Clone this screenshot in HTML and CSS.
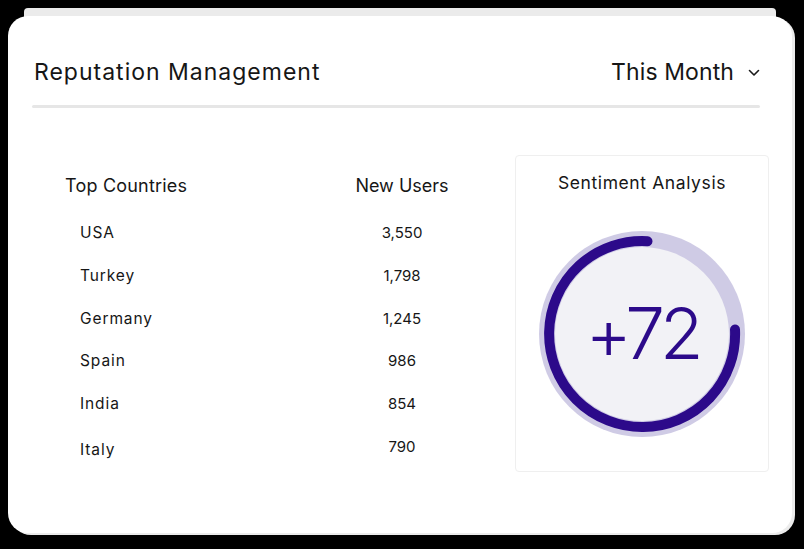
FILE: index.html
```html
<!DOCTYPE html>
<html lang="en">
<head>
<meta charset="utf-8">
<title>Reputation Management</title>
<link rel="stylesheet" href="styles.css">
</head>
<body>
<div class="card">
  <div class="head-wrap">
    <div class="head">
      <h1 class="title">Reputation Management</h1>
      <div class="period">
        <span>This Month</span>
        <svg class="chev" width="12" height="8" viewBox="0 0 12 8"><polyline points="1.5,1.5 6,6 10.5,1.5" fill="none" stroke="#1a1a1a" stroke-width="1.6" stroke-linecap="round" stroke-linejoin="round"/></svg>
      </div>
    </div>
    <div class="divider"></div>
  </div>
  <div class="body">
    <div class="table">
      <div class="th">Top Countries</div>
      <div class="th num">New Users</div>
      <div class="td">USA</div><div class="td num">3,550</div>
      <div class="td">Turkey</div><div class="td num">1,798</div>
      <div class="td">Germany</div><div class="td num">1,245</div>
      <div class="td">Spain</div><div class="td num">986</div>
      <div class="td">India</div><div class="td num">854</div>
      <div class="td low">Italy</div><div class="td num">790</div>
    </div>
    <div class="sentiment">
      <div class="s-title">Sentiment Analysis</div>
      <div class="gauge">
        <svg width="210" height="210" viewBox="0 0 210 210">
          <circle cx="105" cy="105" r="103" fill="#cfcbe5"/>
          <circle cx="105" cy="105" r="87" fill="#f2f2f6"/>
          <path d="M 198 100.5 A 93 93 0 1 1 110.5 12.2" fill="none" stroke="#2c0a8a" stroke-width="10" stroke-linecap="round"/>
        </svg>
        <div class="score">+72</div>
      </div>
    </div>
  </div>
</div>
</body>
</html>
```
FILE: styles.css
```css
* { box-sizing: border-box; }
html, body { margin: 0; padding: 0; }
body {
  background: #000;
  width: 804px;
  height: 549px;
  overflow: hidden;
  font-family: "Inter", "Liberation Sans", sans-serif;
  color: #161616;
  padding: 16px 0 0 8px;
}
.card {
  width: 784px;
  height: 517px;
  background: #fff;
  border-radius: 20px;
  box-shadow: 0 -24px 0 -16px #ebebeb, 3px 2px 0 0 #ececec;
  padding-top: 40px;
}
.head-wrap { padding: 0 32px 0 24px; }
.head {
  display: flex;
  align-items: center;
  justify-content: space-between;
  height: 32px;
  padding: 0 0 0 2px;
}
.title {
  margin: 0;
  font-size: 23px;
  font-weight: 400;
  line-height: 32px;
  letter-spacing: 1px;
}
.period {
  display: flex;
  align-items: center;
  gap: 14px;
  font-size: 23px;
  line-height: 32px;
  letter-spacing: 0.1px;
}
.chev { display: block; margin-top: 2px; }
.divider {
  margin-top: 17px;
  height: 3px;
  background: #e6e6e6;
  border-radius: 2px;
}
.body {
  display: flex;
  padding: 0 23px 0 57px;
}
.table {
  margin-top: 51px;
  display: grid;
  grid-template-columns: 262px 150px;
  grid-template-rows: 53px;
  grid-auto-rows: 42.8px;
  align-content: start;
}
.th {
  font-size: 18px;
  line-height: 53px;
  height: 53px;
  letter-spacing: 0.2px;
}
.td {
  font-size: 15.5px;
  line-height: 42.8px;
  padding-left: 15px;
  letter-spacing: 0.9px;
}
.num { text-align: center; }
.th.num { letter-spacing: 0; }
.td.num { padding-left: 0; letter-spacing: 0; font-size: 15px; }
.low { padding-top: 6px; line-height: 36.8px; }
.sentiment {
  margin-left: auto;
  margin-top: 47px;
  width: 254px;
  height: 317px;
  border: 1px solid #efefef;
  border-radius: 4px;
  padding-top: 15px;
  display: flex;
  flex-direction: column;
  align-items: center;
}
.s-title {
  font-size: 17.5px;
  line-height: 24px;
  letter-spacing: 0.6px;
}
.gauge {
  margin-top: 34px;
  width: 210px;
  height: 210px;
  display: grid;
  place-items: center;
}
.gauge svg, .gauge .score { grid-area: 1 / 1; }
.score {
  font-size: 71px;
  font-weight: 300;
  color: #2c0a8a;
  line-height: 1;
  letter-spacing: -5px;
  padding-bottom: 2px;
}
```
